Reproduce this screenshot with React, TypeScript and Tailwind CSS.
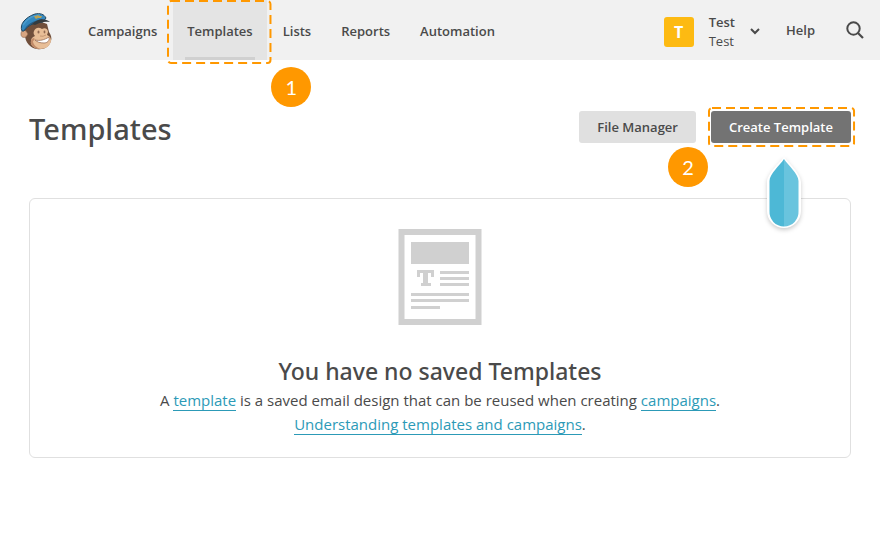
import type { ReactNode } from "react";

const navItems = ["Campaigns", "Templates", "Lists", "Reports", "Automation"];

function DashedFrame() {
  return (
    <svg className="pointer-events-none absolute inset-0 h-full w-full overflow-visible" aria-hidden="true">
      <rect
        x="1"
        y="1"
        rx="3"
        fill="none"
        stroke="#ff9800"
        strokeWidth="2"
        strokeDasharray="9 5"
        style={{ width: "calc(100% - 2px)", height: "calc(100% - 2px)" }}
      />
    </svg>
  );
}

function StepBadge({ children }: { children: ReactNode }) {
  return (
    <span className="flex size-10 items-center justify-center rounded-full bg-[#ff9800] font-[Lato,sans-serif] text-xl leading-none font-normal text-white">
      {children}
    </span>
  );
}

function Logo() {
  return (
    <svg width="34" height="38" viewBox="0 0 34 38" role="img" aria-label="MailChimp">
      <path d="M6 14C4 16 5 19 5 22c0 7 5 13 12 14 7 1 12-2 14-8 1-3 0-6-2-9l-2-8-11-4C11 8 8 11 6 14Z" fill="#704f3b" />
      <path d="M6 18c-3-2-5 0-5 3 0 3 2 4 5 3l2-3Z" fill="#d8a581" stroke="#8a6248" strokeWidth=".6" />
      <path d="M14 18c2-4 5-4 8-2 3-2 6 0 6 3l-1 3c3 1 4 3 4 6-1 5-5 8-11 8-6 0-10-4-9-8 0-3 2-4 4-5-1-1-2-3-1-5Z" fill="#e8be97" />
      <path d="M14 25c1 1 1 2-1 3 0 4 4 7 8 8-7 0-11-4-10-8 0-2 2-3 3-3Z" fill="#c08a68" />
      <ellipse cx="18.500" cy="19" rx="1" ry="1.500" fill="#8f6850" />
      <ellipse cx="24.500" cy="19" rx=".9" ry="1.400" fill="#8f6850" />
      <path d="M20 23q3 1 6-1" fill="none" stroke="#b88663" strokeWidth=".7" />
      <path d="M15 27c5 1 9 0 14-3 1 4-2 6-5 6-4 0-7-1-9-3Z" fill="#fff" stroke="#9b7058" strokeWidth=".8" />
      <path d="M2 18C-1 11 6 4 15 1c5-1 9 0 11 4l-3 4C15 9 8 12 4 18Z" fill="#3488bf" stroke="#23465d" strokeWidth="1" />
      <path d="M3 12C7 6 13 2 20 2" fill="none" stroke="#4b9bcc" strokeWidth="1.500" />
      <path d="M4 17C7 11 13 8 22 6v3C14 9 8 12 4 18Z" fill="#285b80" />
      <path d="M12 11c6-6 13-6 18-2-5-1-10 0-15 3Z" fill="#353b3e" />
      <path d="m14 3 2 0 2-1 1 1 3 0-1 2-3 0-2 1-1-1Z" fill="#b9a253" />
    </svg>
  );
}

function TemplateArt() {
  return (
    <svg width="84" height="96" viewBox="0 0 84 96" aria-hidden="true">
      <rect x="3.500" y="3" width="77" height="90" fill="#fff" stroke="#d0d0d0" strokeWidth="6" />
      <g fill="#d0d0d0">
        <rect x="13" y="13" width="58" height="22" />
        <rect x="42" y="42" width="29" height="3" />
        <rect x="42" y="48" width="29" height="3" />
        <rect x="42" y="54" width="29" height="3" />
        <rect x="13" y="64" width="58" height="3" />
        <rect x="13" y="70" width="58" height="3" />
        <rect x="13" y="77" width="29" height="3" />
        <rect x="19" y="41" width="17" height="3" />
        <rect x="19" y="41" width="3" height="7" />
        <rect x="33" y="41" width="3" height="7" />
        <rect x="25" y="41" width="5" height="15" />
        <rect x="23" y="54" width="10" height="3" />
      </g>
    </svg>
  );
}

function Pointer() {
  return (
    <svg width="36" height="74" viewBox="0 0 36 74" className="overflow-visible drop-shadow-[0_2px_2px_rgba(0,0,0,0.2)]" aria-hidden="true">
      <path d="M18 0C14 5 1 17 1 25v29a17 17 0 0 0 34 0V25C35 17 22 5 18 0Z" fill="#fff" />
      <path d="M18 2C14 8 3.500 17 3.500 24v30A14.500 14.500 0 0 0 18 69.500Z" fill="#4db8d6" />
      <path d="M18 2c4 6 14.500 15 14.500 22v30A14.500 14.500 0 0 1 18 69.500Z" fill="#69c4de" />
    </svg>
  );
}

function TextLink({ children }: { children: ReactNode }) {
  return (
    <a href="#" className="border-b border-[#2c9ab7] text-[#2c9ab7]">
      {children}
    </a>
  );
}

export default function App() {
  return (
    <div className="min-h-screen bg-white font-['Open_Sans',sans-serif] text-[#4a4a4a]">
      <header className="flex h-[60px] items-center bg-[#f1f1f1] pr-4 pl-5 text-[13px] font-semibold">
        <a href="#" className="mt-1">
          <Logo />
        </a>
        <nav className="ml-5 flex h-full gap-[2px]">
          {navItems.map((item) =>
            item === "Templates" ? (
              <a key={item} href="#" aria-current="page" className="relative flex items-center bg-[#e4e4e4] px-[14px] pt-[3px]">
                {item}
                <span className="absolute inset-x-3 bottom-0 h-[3px] bg-[#d0d0d0]" />
                <span className="absolute -right-[5px] -left-[6px] top-0 -bottom-1">
                  <DashedFrame />
                </span>
                <span className="absolute top-[67px] left-[98px]">
                  <StepBadge>1</StepBadge>
                </span>
              </a>
            ) : (
              <a key={item} href="#" className="flex items-center px-[14px] pt-[3px]">
                {item}
              </a>
            ),
          )}
        </nav>
        <div className="ml-auto flex items-center pt-1">
          <button type="button" className="flex items-center text-left">
            <span className="flex size-[30px] items-center justify-center rounded-[3px] bg-[#fdba12] text-base font-bold text-white">T</span>
            <span className="ml-[15px] leading-[19px]">
              <span className="block">Test</span>
              <span className="block font-normal">Test</span>
            </span>
            <svg className="ml-[15px]" width="10" height="8" viewBox="0 0 10 8" aria-hidden="true">
              <path d="m1 1 4 4 4-4" fill="none" stroke="#4a4a4a" strokeWidth="2" />
            </svg>
          </button>
          <a href="#" className="ml-[26px] pb-[2px]">
            Help
          </a>
          <button type="button" aria-label="Search" className="ml-[31px] pb-1">
            <svg className="block" width="18" height="18" viewBox="0 0 18 18" aria-hidden="true">
              <circle cx="7.500" cy="7.500" r="6.200" fill="none" stroke="#4a4a4a" strokeWidth="2" />
              <path d="m12 12 5 5" stroke="#4a4a4a" strokeWidth="2.200" />
            </svg>
          </button>
        </div>
      </header>

      <main className="px-[29px] pt-[51px]">
        <div className="flex items-start justify-between">
          <h1 className="font-['Noto_Sans','Open_Sans',sans-serif] text-[29px] leading-9 font-medium">Templates</h1>
          <div className="flex gap-[15px] text-[13px] font-semibold">
            <div className="relative">
              <button type="button" className="h-8 rounded-[3px] bg-[#e0e0e0] px-[18px] pt-px">
                File Manager
              </button>
              <span className="absolute -right-3 top-9">
                <StepBadge>2</StepBadge>
              </span>
            </div>
            <div className="relative">
              <button type="button" className="h-8 rounded-[3px] bg-[#737373] px-[18px] pt-px text-white">
                Create Template
              </button>
              <span className="absolute -right-1 -left-[3px] -inset-y-1">
                <DashedFrame />
              </span>
              <span className="absolute top-[46px] right-[49px] z-10">
                <Pointer />
              </span>
            </div>
          </div>
        </div>

        <section className="mt-[51px] flex flex-col items-center rounded-md border border-[#e0e0e0] px-6 pt-[30px] pb-[21px] text-center">
          <TemplateArt />
          <h2 className="mt-[30px] font-['Noto_Sans','Open_Sans',sans-serif] text-[23px] leading-8 font-medium">You have no saved Templates</h2>
          <p className="mt-px text-[15px] leading-6">
            A <TextLink>template</TextLink> is a saved email design that can be reused when creating <TextLink>campaigns</TextLink>.
            <br />
            <TextLink>Understanding templates and campaigns</TextLink>.
          </p>
        </section>
      </main>
    </div>
  );
}
